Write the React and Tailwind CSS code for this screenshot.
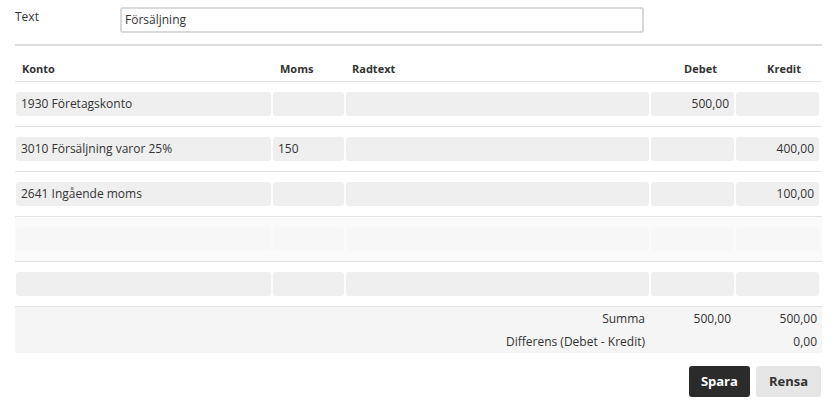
import React from "react";

const cols = [
  { w: "w-[255px]", align: "text-left" },
  { w: "w-[71px]", align: "text-left" },
  { w: "w-[303px]", align: "text-left" },
  { w: "w-[83px]", align: "text-right" },
  { w: "w-[83px]", align: "text-right" },
];

const rows = [
  ["1930 Företagskonto", "", "", "500,00", ""],
  ["3010 Försäljning varor 25%", "150", "", "", "400,00"],
  ["2641 Ingående moms", "", "", "", "100,00"],
  ["", "", "", "", ""],
  ["", "", "", "", ""],
];

export default function App() {
  return (
    <div
      className="w-[834px] h-[408px] bg-white text-[#333] text-[12px]"
      style={{ fontFamily: '"Open Sans", "Liberation Sans", sans-serif' }}
    >
      <div className="ml-[15px] w-[807px] pt-[7px]">
        {/* Text field */}
        <div className="flex items-start">
          <div className="w-[105px] pt-[1px] leading-[18px]">Text</div>
          <div className="w-[524px] h-[26px] border-2 border-[#d9d9d9] rounded-[3px] px-[3px] flex items-center leading-[18px]">
            Försäljning
          </div>
        </div>

        <div className="mt-[11px] h-[2px] bg-[#dddddd]" />

        {/* Header */}
        <div className="h-[36px] flex items-end pb-[4px] border-b border-[#e3e3e3] font-bold text-[11px] leading-[16px] pl-[1px] gap-[2px]">
          <div className="w-[255px] pl-[6px]">Konto</div>
          <div className="w-[71px] pl-[7px]">Moms</div>
          <div className="w-[303px] pl-[6px]">Radtext</div>
          <div className="w-[83px] text-right pr-[17px]">Debet</div>
          <div className="w-[83px] text-right pr-[18px]">Kredit</div>
        </div>

        {/* Rows */}
        {rows.map((r, i) => {
          const hover = i === 3;
          return (
            <div
              key={i}
              className={`h-[45px] flex items-center gap-[2px] pl-[1px] border-b border-[#e3e3e3] ${
                hover ? "bg-[#fafafa]" : ""
              }`}
            >
              {r.map((v, j) => (
                <div
                  key={j}
                  className={`${cols[j].w} ${cols[j].align} h-[24px] rounded-[3px] px-[5px] leading-[24px] ${
                    hover ? "bg-[#f6f7f6]" : "bg-[#efefef]"
                  }`}
                >
                  {v}
                </div>
              ))}
            </div>
          );
        })}

        {/* Summary */}
        <div className="bg-[#f5f5f5] h-[46px] leading-[23px]">
          <div className="flex">
            <div className="w-[630px] text-right">Summa</div>
            <div className="w-[86px] text-right">500,00</div>
            <div className="w-[86px] text-right">500,00</div>
          </div>
          <div className="flex">
            <div className="w-[630px] text-right">Differens (Debet - Kredit)</div>
            <div className="w-[86px] text-right"></div>
            <div className="w-[86px] text-right">0,00</div>
          </div>
        </div>

        {/* Buttons */}
        <div className="mt-[13px] flex justify-end gap-[6px] pr-[1px]">
          <button className="h-[31px] px-[12px] rounded-[3px] bg-[#2b2b2b] text-white font-bold text-[13px] leading-[31px]">
            Spara
          </button>
          <button className="h-[31px] px-[13px] rounded-[3px] bg-[#e6e6e6] text-[#333] font-bold text-[13px] leading-[31px]">
            Rensa
          </button>
        </div>
      </div>
    </div>
  );
}
